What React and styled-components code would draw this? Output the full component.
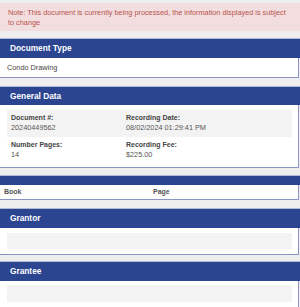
import React from 'react';
import styled, {createGlobalStyle} from 'styled-components';

const GlobalStyle = createGlobalStyle`
  html, body {
    margin: 0;
    padding: 0;
    background: #eeeeee;
  }
  body {
    font-family: "Liberation Sans", Arial, sans-serif;
    overflow: hidden;
  }
`;

const Page = styled.div`
  width: 300px;
  padding-top: 3px;
  display: flex;
  flex-direction: column;
`;

const Alert = styled.div`
  background: #f2dede;
  color: #b9534f;
  font-size: 7.3px;
  line-height: 9.5px;
  padding: 5px 8px 4px;
`;

const Panel = styled.section`
  margin-top: ${p => p.$gap || 7}px;
  display: flex;
  flex-direction: column;
`;

const PanelHeader = styled.div`
  height: ${p => p.$height || 19}px;
  border-top: 1px solid #b3b9d9;
  background: #2b4591;
  color: #fff;
  font-size: 8.3px;
  font-weight: bold;
  line-height: ${p => p.$height || 19}px;
  padding: 0 10px;
`;

const PanelBody = styled.div`
  margin-right: 1px;
  background: #fff;
  border-right: 1px solid #8a93c4;
  border-bottom: 1px solid #8a93c4;
  padding: ${p => p.$pad || '0 6px 0 7px'};
  color: #444;
  font-size: 7.3px;
`;

const PlainLine = styled.div`
  height: 19px;
  line-height: 19px;
`;

const DataRow = styled.div`
  display: grid;
  grid-template-columns: 115px 1fr;
  padding: 3px 4px 4px;
  background: ${p => (p.$striped ? '#f3f3f3' : 'transparent')};
`;

const Field = styled.div`
  display: flex;
  flex-direction: column;
  line-height: 10px;
`;

const Label = styled.span`
  font-weight: bold;
  font-size: 7px;
  color: #444;
`;

const Value = styled.span`
  color: #555;
`;

const BookRow = styled.div`
  display: grid;
  grid-template-columns: 149px 1fr;
  height: 14px;
  line-height: 14px;
  padding-left: 4px;
  font-weight: bold;
  font-size: 7px;
  color: #555;
`;

const EmptyBox = styled.div`
  height: ${p => p.$height || 16}px;
  background: #f3f3f3;
`;

const rows = [
    [['Document #:', '20240449562'], ['Recording Date:', '08/02/2024 01:29:41 PM']],
    [['Number Pages:', '14'], ['Recording Fee:', '$225.00']],
];

export default function App() {
    return (
        <Page>
            <GlobalStyle/>
            <Alert>
                Note: This document is currently being processed, the information displayed is subject to change
            </Alert>

            <Panel>
                <PanelHeader>Document Type</PanelHeader>
                <PanelBody>
                    <PlainLine>Condo Drawing</PlainLine>
                </PanelBody>
            </Panel>

            <Panel $gap={8}>
                <PanelHeader $height={18}>General Data</PanelHeader>
                <PanelBody $pad="5px 6px 3px 7px">
                    {rows.map((row, i) => (
                        <DataRow key={i} $striped={i % 2 === 0}>
                            {row.map(([label, value]) => (
                                <Field key={label}>
                                    <Label>{label}</Label>
                                    <Value>{value}</Value>
                                </Field>
                            ))}
                        </DataRow>
                    ))}
                </PanelBody>
            </Panel>

            <Panel>
                <PanelHeader $height={9}/>
                <PanelBody $pad="0">
                    <BookRow>
                        <span>Book</span>
                        <span>Page</span>
                    </BookRow>
                </PanelBody>
            </Panel>

            <Panel $gap={8}>
                <PanelHeader>Grantor</PanelHeader>
                <PanelBody $pad="5px 6px 5px 7px">
                    <EmptyBox/>
                </PanelBody>
            </Panel>

            <Panel $gap={6}>
                <PanelHeader>Grantee</PanelHeader>
                <PanelBody $pad="4px 6px 5px 7px">
                    <EmptyBox $height={17}/>
                </PanelBody>
            </Panel>
        </Page>
    );
}
